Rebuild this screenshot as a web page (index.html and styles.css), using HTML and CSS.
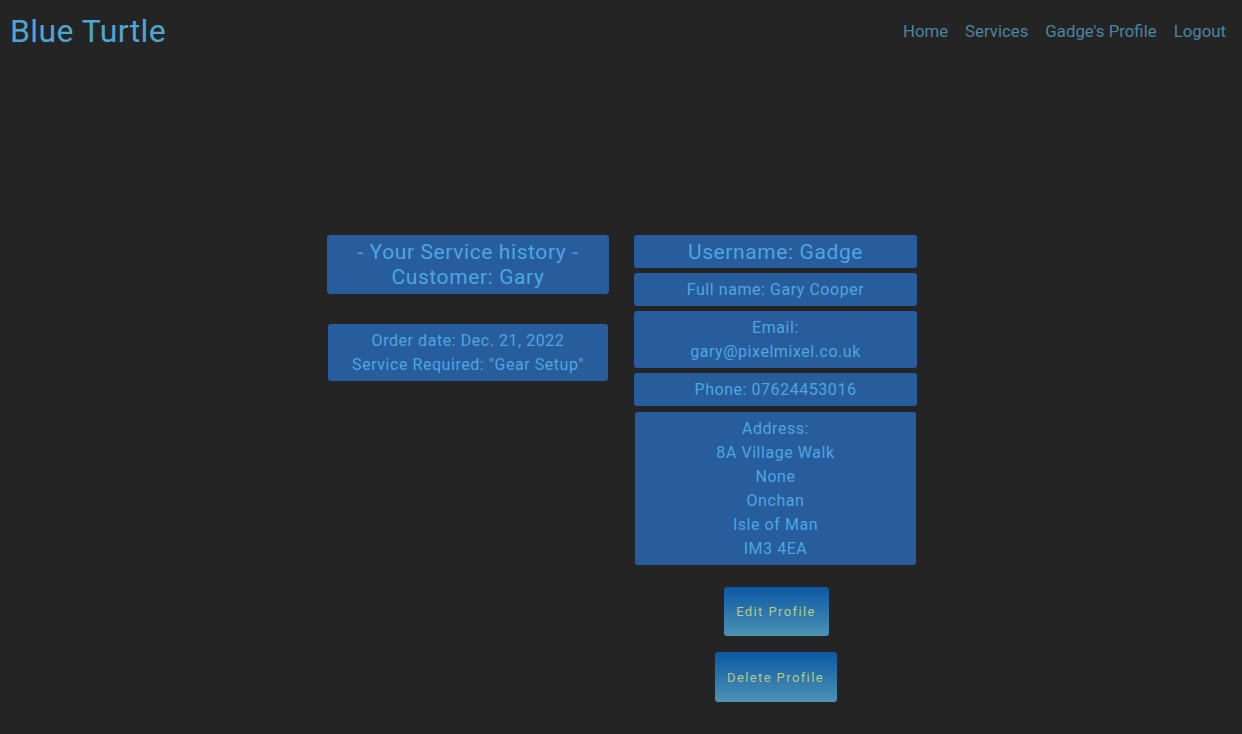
FILE: index.html
```html
<!DOCTYPE html>
<html>
<head>
<meta charset="utf-8">
<link rel="stylesheet" href="styles.css">
</head>
<body>
<header class="topbar">
  <a class="brand" href="#">Blue Turtle</a>
  <nav class="nav">
    <a href="#">Home</a>
    <a href="#">Services</a>
    <a href="#">Gadge's Profile</a>
    <a href="#">Logout</a>
  </nav>
</header>
<main class="content">
  <section class="col left">
    <div class="box title">- Your Service history -<br>Customer: Gary</div>
    <div class="box order">Order date: Dec. 21, 2022<br>Service Required: "Gear Setup"</div>
  </section>
  <section class="col right">
    <div class="box title one">Username: Gadge</div>
    <div class="box">Full name: Gary Cooper</div>
    <div class="box">Email:<br>gary@pixelmixel.co.uk</div>
    <div class="box">Phone: 07624453016</div>
    <div class="box addr">Address:<br>8A Village Walk<br>None<br>Onchan<br>Isle of Man<br>IM3 4EA</div>
    <div class="actions">
      <button class="btn edit">Edit Profile</button>
      <button class="btn del">Delete Profile</button>
    </div>
  </section>
</main>
</body>
</html>
```
FILE: styles.css
```css
html, body {
  margin: 0;
  padding: 0;
  background: #242424;
  font-family: Roboto, "Liberation Sans", sans-serif;
}
.topbar {
  display: flex;
  justify-content: space-between;
  align-items: center;
  padding: 11px 16px 0 10px;
  height: 40px;
}
.brand {
  color: #4ea6d2;
  font-size: 32px;
  text-decoration: none;
  letter-spacing: 0.4px;
}
.nav {
  display: flex;
  gap: 17px;
}
.nav a {
  color: #4a84a2;
  text-decoration: none;
  font-size: 16.8px;
}
.content {
  display: flex;
  justify-content: center;
  gap: 25px;
  margin-top: 184px;
  padding-left: 2px;
}
.col {
  display: flex;
  flex-direction: column;
  gap: 5px;
}
.col.left { width: 282px; }
.col.right { width: 283px; }
.box {
  background: #275c9d;
  color: #4ca7e0;
  border-radius: 3px;
  text-align: center;
  font-size: 16px;
  line-height: 24px;
  letter-spacing: 0.55px;
  padding: 5px 6px 4px;
}
.box.title {
  font-size: 21px;
  line-height: 25px;
  letter-spacing: 0.6px;
  padding: 5px 6px 4px;
}
.box.title.one {
  padding: 5px 6px 3px;
}
.box.order {
  margin: 25px 1px 0;
  padding: 5px 6px 4px;
}
.box.addr {
  margin: 1px 1px 0;
  padding: 5px 6px 4px;
}
.actions {
  display: flex;
  flex-direction: column;
  align-items: center;
  gap: 16px;
  margin-top: 17px;
}
.btn {
  border: none;
  border-radius: 3px;
  background: linear-gradient(to bottom, #0b58a4, #4c93b4);
  color: #b9c78a;
  font-family: Roboto, "Liberation Sans", sans-serif;
  font-size: 13px;
  letter-spacing: 1.4px;
  height: 50px;
  padding: 0 8px;
}
.btn.edit { width: 105px; height: 49px; margin-left: 1px; }
.btn.del { width: 122px; }
```
